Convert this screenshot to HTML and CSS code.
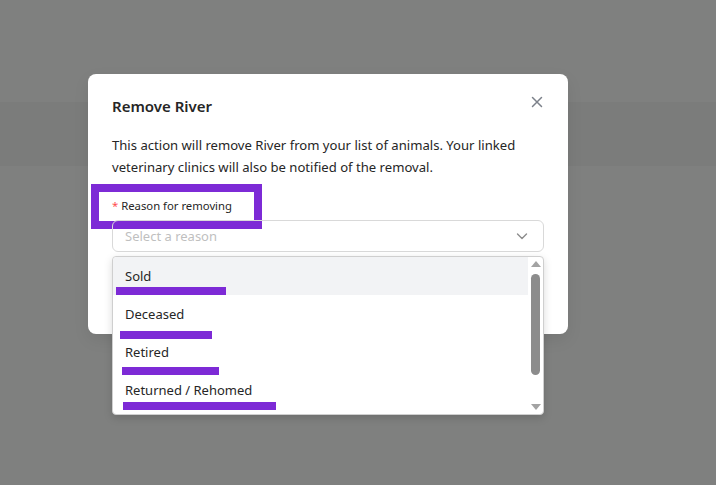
FILE: index.html
```html
<!DOCTYPE html>
<html>
<head>
<meta charset="utf-8">
<link rel="stylesheet" href="styles.css">
</head>
<body>
<div class="page">
  <div class="band"></div>
  <div class="modal">
    <div class="mark-box"></div>
    <div class="header">
      <h2 class="title">Remove River</h2>
      <button class="close" aria-label="Close">
        <svg width="14" height="14" viewBox="0 0 14 14"><path d="M2.5 2.5 L11.5 11.5 M11.5 2.5 L2.5 11.5" stroke="#7c818a" stroke-width="1.5" stroke-linecap="round" fill="none"/></svg>
      </button>
    </div>
    <p class="desc">This action will remove River from your list of animals. Your linked veterinary clinics will also be notified of the removal.</p>
    <div class="label"><span class="req">*</span> Reason for removing</div>
    <div class="select">
      <span class="placeholder">Select a reason</span>
      <svg class="chev" width="12" height="12" viewBox="0 0 12 12"><path d="M1.5 4 L6 8.5 L10.5 4" stroke="#8c8c8c" stroke-width="1.4" fill="none" stroke-linecap="round" stroke-linejoin="round"/></svg>
      <div class="dropdown">
        <ul class="options">
          <li class="opt active">Sold<span class="bar b1"></span></li>
          <li class="opt">Deceased<span class="bar b2"></span></li>
          <li class="opt">Retired<span class="bar b3"></span></li>
          <li class="opt">Returned / Rehomed<span class="bar b4"></span></li>
        </ul>
        <div class="scroll">
          <span class="arrow up"></span>
          <span class="thumb"></span>
          <span class="arrow down"></span>
        </div>
      </div>
    </div>
  </div>
</div>
</body>
</html>
```
FILE: styles.css
```css
* { box-sizing: border-box; }
html, body { margin: 0; padding: 0; }
body {
  width: 716px;
  height: 485px;
  overflow: hidden;
  background: #7f807f;
  font-family: "Noto Sans", "Open Sans", sans-serif;
}
.page {
  position: relative;
  height: 485px;
  padding: 74px 0 0 88px;
}
.band {
  position: absolute;
  left: 0;
  right: 0;
  top: 102px;
  height: 64px;
  background: #7b7c7b;
}
.modal {
  position: relative;
  width: 480px;
  height: 260px;
  background: #fff;
  border-radius: 8px;
  padding: 20px 24px;
  box-shadow: 0 6px 16px rgba(0,0,0,0.08);
}
.header {
  display: flex;
  justify-content: space-between;
  align-items: center;
  height: 24px;
}
.title {
  margin: 0;
  font-size: 15px;
  font-weight: 600;
  color: #262626;
  line-height: 24px;
}
.close {
  border: 0;
  background: none;
  padding: 0;
  width: 14px;
  height: 14px;
  display: flex;
  margin-top: -9px;
}
.desc {
  margin: 16px 0 0;
  font-size: 13.1px;
  line-height: 22px;
  color: #262626;
}
.label {
  margin-top: 18px;
  font-size: 11.3px;
  line-height: 20px;
  color: #262626;
}
.req { color: #ff4d4f; }
.select {
  position: relative;
  margin-top: 4px;
  height: 32px;
  border: 1px solid #d9d9d9;
  border-radius: 6px;
  display: flex;
  align-items: center;
  padding: 0 15px 0 12px;
  justify-content: space-between;
}
.placeholder {
  font-size: 13px;
  color: #bfbfbf;
}
.dropdown {
  position: absolute;
  left: -1px;
  right: -1px;
  top: 35px;
  height: 159px;
  background: #fff;
  border: 1px solid #cfcfcf;
  border-radius: 4px;
  box-shadow: 0 3px 8px rgba(0,0,0,0.15);
  display: flex;
  z-index: 5;
}
.options {
  list-style: none;
  margin: 0;
  padding: 0;
  flex: 1;
}
.opt {
  position: relative;
  height: 38px;
  line-height: 38px;
  padding-left: 12px;
  font-size: 13px;
  color: #262626;
}
.opt.active { background: #f2f3f5; border-radius: 4px 0 0 0; }
.bar {
  position: absolute;
  height: 8px;
  background: #7d2ad6;
}
.b1 { left: 3px; top: 30px; width: 110px; }
.b2 { left: 7px; top: 36px; width: 92px; }
.b3 { left: 9px; top: 34px; width: 97px; }
.b4 { left: 10px; top: 31px; width: 153px; }
.scroll {
  width: 15px;
  display: flex;
  flex-direction: column;
  align-items: center;
  padding: 4px 0 4px;
}
.arrow {
  width: 0;
  height: 0;
  border-left: 5px solid transparent;
  border-right: 5px solid transparent;
}
.arrow.up { border-bottom: 6px solid #a3a3a3; }
.arrow.down { border-top: 6px solid #a3a3a3; margin-top: auto; }
.thumb {
  margin-top: 7px;
  width: 9px;
  height: 101px;
  border-radius: 5px;
  background: #8c8c8c;
}
.mark-box {
  position: absolute;
  left: 3px;
  top: 110px;
  width: 171px;
  height: 45px;
  border: 8px solid #7d2ad6;
}
```
